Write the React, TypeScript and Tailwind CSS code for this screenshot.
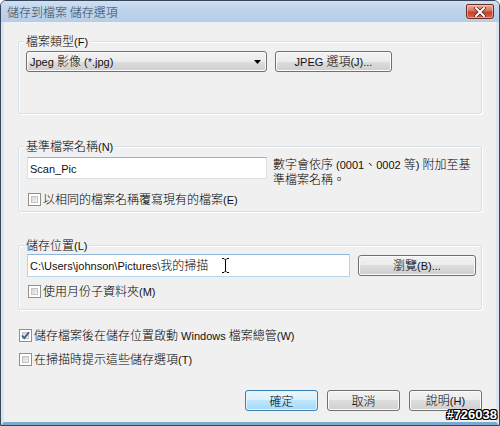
import React from "react";

const base =
  "flex items-center rounded-[3px] border border-[#707070] bg-[linear-gradient(to_bottom,#f2f2f2_0%,#ebebeb_50%,#dddddd_50%,#cfcfcf_100%)] shadow-[inset_0_0_0_1px_#fcfcfc] leading-[14px]";
const btn = `${base} justify-center`;

function T({ s }: { s: string }) {
  const parts = s.split(/([\u3000-\u303f\u3400-\u9fff\uff00-\uffef]+)/);
  return (
    <span className="whitespace-pre">
      {parts.map((p, i) =>
        i % 2 === 1 ? (
          <span key={i}>{p}</span>
        ) : p ? (
          <span key={i} className="font-['Liberation_Sans',sans-serif] text-[11px] font-normal text-[#111]">
            {p}
          </span>
        ) : null
      )}
    </span>
  );
}

function Check({ checked = false }: { checked?: boolean }) {
  return (
    <span className="relative flex h-[13px] w-[13px] shrink-0 border border-[#8f8f8f] bg-white p-[2px]">
      <span className="flex-1 border border-[#c4c4c4] bg-[linear-gradient(135deg,#d2d4d8_0%,#f4f4f4_100%)]" />
      {checked && (
        <svg className="absolute left-[0px] top-[0px]" width="11" height="11" viewBox="0 0 11 11">
          <path d="M2 5.5 L4.3 8 L9 2.2" fill="none" stroke="#3d5a8f" strokeWidth="1.8" />
        </svg>
      )}
    </span>
  );
}

function Group({
  label,
  className,
  children,
}: {
  label: string;
  className: string;
  children: React.ReactNode;
}) {
  return (
    <div
      className={`relative rounded-[3px] border border-[#d5dfe5] shadow-[1px_1px_0_#ffffff,inset_1px_1px_0_#ffffff] ${className}`}
    >
      <span className="absolute left-[5px] top-[-8px] bg-[#f0f0f0] px-[2px] leading-[14px]">
        <T s={label} />
      </span>
      {children}
    </div>
  );
}

export default function App() {
  return (
    <div className="relative flex h-[426px] w-[500px] flex-col overflow-hidden rounded-t-[6px] border border-[#37475a] bg-[#f0f0f0] font-['Noto_Sans_CJK_TC','Liberation_Sans',sans-serif] text-[12px] font-light text-black">
      {/* Title bar */}
      <div className="flex h-[21px] shrink-0 items-center justify-between bg-[linear-gradient(to_bottom,#cfe0f2_0%,#bfd4ec_40%,#b6cde8_100%)] pl-[6px] pr-[5px]">
        <span className="leading-[14px] text-[#34465a]">儲存到檔案 儲存選項</span>
        <div className="flex h-[15px] w-[28px] items-center justify-center rounded-b-[3px] rounded-t-[2px] border border-[#6e2b22] bg-[linear-gradient(to_bottom,#eab0a0_0%,#d8705a_45%,#c4402a_55%,#d8684c_100%)] shadow-[inset_0_0_0_1px_rgba(255,220,210,0.5)]">
          <svg width="12" height="10" viewBox="0 0 12 10">
            <path d="M2 1 L10 9 M10 1 L2 9" stroke="#5a2218" strokeWidth="3.6" strokeLinecap="square" />
            <path d="M2 1 L10 9 M10 1 L2 9" stroke="#ffffff" strokeWidth="2" strokeLinecap="square" />
          </svg>
        </div>
      </div>

      {/* Body */}
      <div className="flex flex-1 flex-col border-x-[3px] border-b-[3px] border-x-[#dbe5ef] border-b-[#79abcc] px-[14px]">
        <Group label="檔案類型(F)" className="mt-[19px] h-[73px] pl-[7px] pt-[9px]">
          <div className="flex">
            <div className={`${base} h-[21px] w-[241px] justify-between pl-[3px] pr-[5px]`}>
              <T s="Jpeg 影像 (*.jpg)" />
              <svg width="7" height="4" viewBox="0 0 7 4">
                <path d="M0 0 H7 L3.5 4 Z" fill="#000" />
              </svg>
            </div>
            <div className={`${btn} ml-[8px] h-[21px] w-[117px]`}>
              <T s="JPEG 選項(J)..." />
            </div>
          </div>
        </Group>

        <Group label="基準檔案名稱(N)" className="mt-[32px] h-[66px] pl-[8px] pt-[10px]">
          <div className="flex items-start">
            <div className="flex h-[22px] w-[240px] items-center border border-[#dbdfe6] border-t-[#abadb3] bg-white pl-[2px]">
              <T s="Scan_Pic" />
            </div>
            <div className="ml-[6px] flex flex-col leading-[13px]">
              <T s="數字會依序 (0001、0002 等) 附加至基" />
              <T s="準檔案名稱。" />
            </div>
          </div>
          <div className="mt-[8px] flex h-[13px] items-center pl-[1px]">
            <Check />
            <span className="ml-[2px] leading-[13px]">
              <T s="以相同的檔案名稱覆寫現有的檔案(E)" />
            </span>
          </div>
        </Group>

        <Group label="儲存位置(L)" className="mt-[33px] h-[65px] pl-[8px] pt-[8px]">
          <div className="flex items-center">
            <div className="flex h-[23px] w-[323px] items-center border border-[#b7d5ea] border-t-[#8fb6d6] bg-white pl-[2px]">
              <T s="C:\Users\johnson\Pictures\我的掃描" />
            </div>
            <div className={`${btn} ml-[8px] h-[21px] w-[118px]`}>
              <T s="瀏覽(B)..." />
            </div>
          </div>
          <div className="mt-[8px] flex h-[13px] items-center pl-[1px]">
            <Check />
            <span className="ml-[2px] leading-[13px]">
              <T s="使用月份子資料夾(M)" />
            </span>
          </div>
        </Group>

        <div className="mt-[19px] flex h-[13px] items-center pl-[1px]">
          <Check checked />
          <span className="ml-[2px] leading-[13px]">
            <T s="儲存檔案後在儲存位置啟動 Windows 檔案總管(W)" />
          </span>
        </div>
        <div className="mt-[11px] flex h-[13px] items-center pl-[1px]">
          <Check />
          <span className="ml-[2px] leading-[13px]">
            <T s="在掃描時提示這些儲存選項(T)" />
          </span>
        </div>

        <div className="mt-[24px] flex justify-end gap-[9px]">
          <div className="flex h-[21px] w-[73px] items-center justify-center rounded-[3px] border border-[#3c7fb1] bg-[linear-gradient(to_bottom,#eaf6fd_0%,#d9f0fc_50%,#bee6fd_50%,#a7d9f5_100%)] shadow-[inset_0_0_0_1px_#e4f4fc] leading-[14px]">
            確定
          </div>
          <div className={`${btn} h-[21px] w-[73px]`}>取消</div>
          <div className={`${btn} h-[21px] w-[73px]`}>
            <T s="說明(H)" />
          </div>
        </div>
      </div>

      {/* I-beam cursor */}
      <svg className="absolute left-[220px] top-[256px]" width="9" height="17" viewBox="0 0 9 17">
        <path d="M1 1.5 H3 L4.5 3 L6 1.5 H8 M4.5 3 V14 M1 15.5 H3 L4.5 14 L6 15.5 H8" fill="none" stroke="#fff" strokeWidth="2.6" />
        <path d="M1 1.5 H3 L4.5 3 L6 1.5 H8 M4.5 3 V14 M1 15.5 H3 L4.5 14 L6 15.5 H8" fill="none" stroke="#000" strokeWidth="1" />
      </svg>

      {/* watermark */}
      <span className="absolute bottom-[4px] right-[2px] font-['Liberation_Sans',sans-serif] text-[13px] font-bold leading-[13px] text-white [text-shadow:1px_0_0_#000,-1px_0_0_#000,0_1px_0_#000,0_-1px_0_#000,1px_1px_0_#000,-1px_-1px_0_#000,1px_-1px_0_#000,-1px_1px_0_#000]">
        #726038
      </span>
    </div>
  );
}
